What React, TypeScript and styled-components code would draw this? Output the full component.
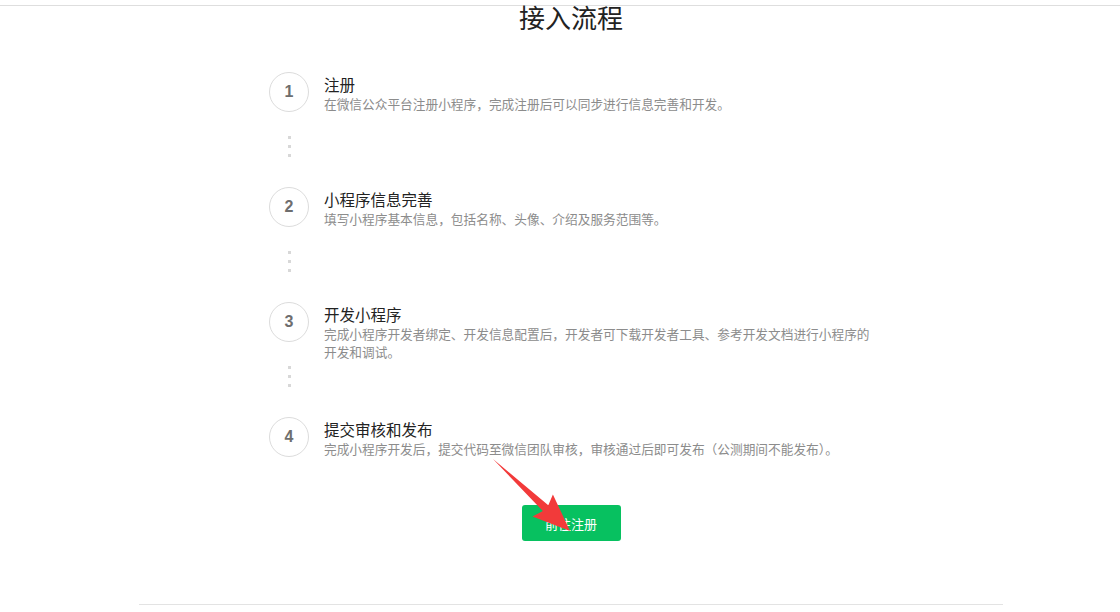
import React from 'react'
import styled, { createGlobalStyle } from 'styled-components'

const GlobalStyle = createGlobalStyle`
  html, body {
    margin: 0;
    padding: 0;
    background: #fff;
  }
  body {
    font-family: "Liberation Sans", "Noto Sans CJK SC", sans-serif;
    color: #222;
  }
`

const Screen = styled.div`
  position: relative;
  width: 1120px;
  height: 612px;
  overflow: hidden;
`

const TopBar = styled.div`
  height: 5px;
  border-bottom: 1px solid #dedede;
`

const Page = styled.div`
  width: 864px;
  margin-left: 139px;
`

const Title = styled.h2`
  margin: -1px 0 0;
  font-family: "Noto Sans CJK SC", sans-serif;
  font-size: 26px;
  font-weight: 400;
  line-height: 23px;
  text-align: center;
  color: #222;
`

const Steps = styled.ol`
  list-style: none;
  margin: 44px 0 0 130px;
  padding: 0;
  width: 610px;
`

const Step = styled.li<{ $last?: boolean }>`
  display: flex;
  gap: 15px;
  height: ${(p) => (p.$last ? '40px' : '115px')};
`

const Marker = styled.div`
  display: flex;
  flex-direction: column;
  align-items: center;
  flex: none;
  width: 40px;
`

const Circle = styled.div`
  box-sizing: border-box;
  width: 40px;
  height: 40px;
  border: 1px solid #dcdcdc;
  border-radius: 50%;
  display: flex;
  align-items: center;
  justify-content: center;
  font-family: "Liberation Sans", sans-serif;
  font-weight: 700;
  font-size: 16px;
  color: #6e6e6e;
`

const Dots = styled.div`
  display: flex;
  flex-direction: column;
  gap: 6px;
  margin-top: 24px;
`

const Dot = styled.span`
  width: 3px;
  height: 3px;
  background: #d8d8d8;
`

const Body = styled.div`
  padding-top: 2px;
  font-family: "Noto Sans CJK SC", sans-serif;
`

const StepTitle = styled.div`
  font-size: 15.5px;
  line-height: 20px;
  color: #222;
`

const StepDesc = styled.div`
  margin-top: 1px;
  font-size: 12.7px;
  line-height: 18px;
  color: #8c8c8c;
`

const Actions = styled.div`
  display: flex;
  justify-content: center;
  margin-top: 48px;
`

const Button = styled.button`
  width: 99px;
  height: 36px;
  border: none;
  border-radius: 3px;
  background: #07c160;
  color: #fff;
  font-family: "Noto Sans CJK SC", sans-serif;
  font-size: 13px;
  cursor: pointer;
`

const Footer = styled.div`
  margin-top: 63px;
  border-top: 1px solid #e3e3e3;
`

const Annotation = styled.svg`
  position: absolute;
  top: 0;
  left: 0;
  width: 1120px;
  height: 612px;
  pointer-events: none;
`

const steps = [
  { title: '注册', desc: '在微信公众平台注册小程序，完成注册后可以同步进行信息完善和开发。' },
  { title: '小程序信息完善', desc: '填写小程序基本信息，包括名称、头像、介绍及服务范围等。' },
  {
    title: '开发小程序',
    desc: '完成小程序开发者绑定、开发信息配置后，开发者可下载开发者工具、参考开发文档进行小程序的开发和调试。',
  },
  { title: '提交审核和发布', desc: '完成小程序开发后，提交代码至微信团队审核，审核通过后即可发布（公测期间不能发布）。' },
]

export default function App() {
  return (
    <Screen>
      <GlobalStyle />
      <TopBar />
      <Page>
        <Title>接入流程</Title>
        <Steps>
          {steps.map((s, i) => {
            const last = i === steps.length - 1
            return (
              <Step key={s.title} $last={last}>
                <Marker>
                  <Circle>{i + 1}</Circle>
                  {!last && (
                    <Dots>
                      <Dot />
                      <Dot />
                      <Dot />
                    </Dots>
                  )}
                </Marker>
                <Body>
                  <StepTitle>{s.title}</StepTitle>
                  <StepDesc>{s.desc}</StepDesc>
                </Body>
              </Step>
            )
          })}
        </Steps>
        <Actions>
          <Button>前往注册</Button>
        </Actions>
        <Footer />
      </Page>
      <Annotation viewBox="0 0 1120 612">
        <polygon
          points="493,459 548.3,505.3 552.9,494.4 570,531 532.5,516.4 542.9,511.1"
          fill="#f23a3a"
        />
      </Annotation>
    </Screen>
  )
}
